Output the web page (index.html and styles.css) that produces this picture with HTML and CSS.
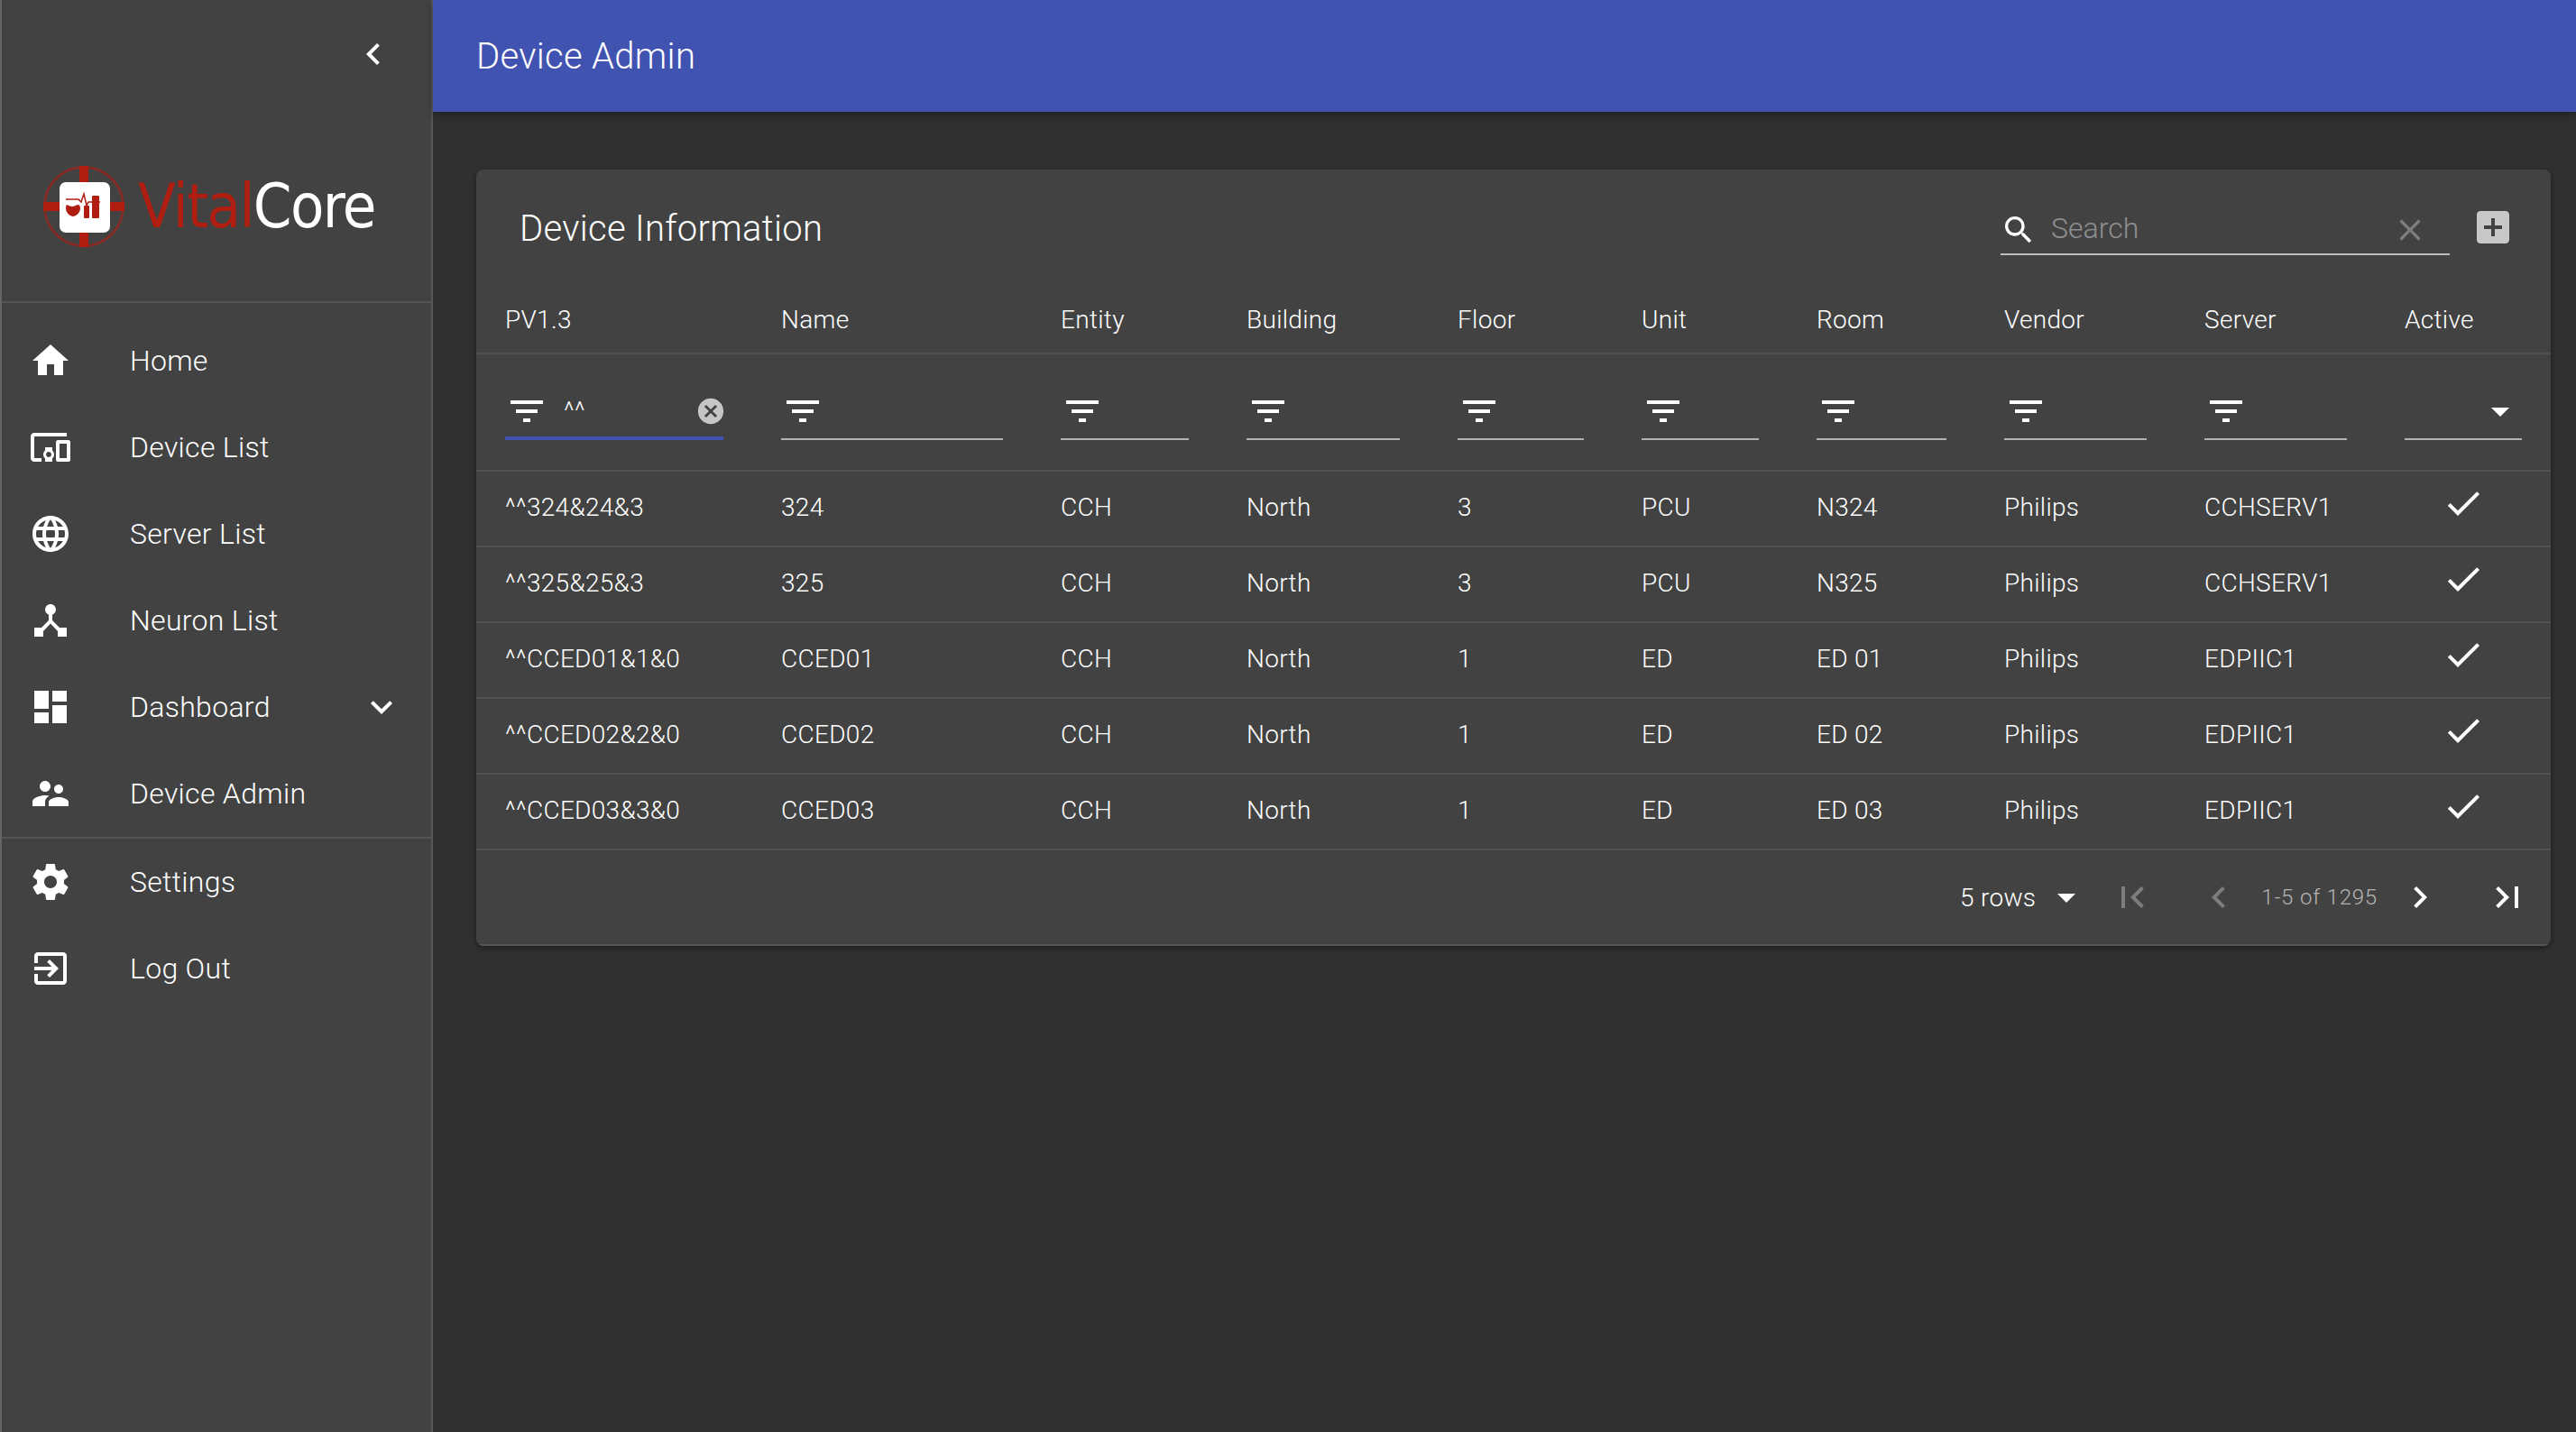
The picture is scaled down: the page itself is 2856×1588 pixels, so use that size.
FILE: index.html
```html
<!DOCTYPE html>
<html lang="en">
<head>
    <meta charset="UTF-8">
    <title>Device Admin</title>
    <link rel="stylesheet" href="styles.css">
</head>
<body>
    <svg class="icon-defs">
        <symbol id="i-filter" viewBox="0 0 24 24"><path d="M10 18h4v-2h-4v2zM3 6v2h18V6H3zm3 7h12v-2H6v2z"/></symbol>
        <symbol id="i-check" viewBox="0 0 24 24"><path d="M9 16.17L4.83 12l-1.42 1.41L9 19 21 7l-1.41-1.41z"/></symbol>
        <symbol id="i-drop" viewBox="0 0 24 24"><path d="M7 10l5 5 5-5z"/></symbol>
    </svg>

    <aside class="sidebar">
        <div class="sidebar-top">
            <svg class="icon" viewBox="0 0 24 24"><path d="M15.41 7.41L14 6l-6 6 6 6 1.41-1.41L10.83 12z"/></svg>
        </div>
        <div class="logo">
            <svg class="logo-mark" viewBox="0 0 90 90">
                <circle cx="45" cy="45" r="43.5" fill="none" stroke="#8a2a22" stroke-width="2.5"/>
                <rect x="40" y="0" width="10" height="90" fill="#b01e12"/>
                <rect x="0" y="40" width="90" height="10" fill="#b01e12"/>
                <rect x="18" y="18" width="56" height="56" rx="7" fill="#fff"/>
                <path d="M25 37h14l3 3 3-9 3 13 2-4h13" fill="none" stroke="#b01e12" stroke-width="1.5"/>
                <path d="M26 43q4 2 6 2t6-2q3 0 3 4c0 5-5 9-8 9s-8-4-8-9q0-3 1-4z" fill="#b01e12"/>
                <rect x="45" y="44" width="6" height="14" rx="1" fill="#b01e12"/>
                <rect x="54" y="33" width="8" height="25" rx="1" fill="#b01e12"/>
            </svg>
            <span class="logo-text"><span class="logo-red">Vital</span>Core</span>
        </div>
        <ul class="nav nav-main">
            <li class="nav-item">
                <svg class="icon" viewBox="0 0 24 24"><path d="M10 20v-6h4v6h5v-8h3L12 3 2 12h3v8z"/></svg>
                <span>Home</span>
            </li>
            <li class="nav-item">
                <svg class="icon" viewBox="0 0 24 24"><path d="M3 6h18V4H3c-1.1 0-2 .9-2 2v12c0 1.1.9 2 2 2h4v-2H3V6zm10 6H9v1.78c-.61.55-1 1.33-1 2.22s.39 1.67 1 2.22V20h4v-1.78c.61-.55 1-1.34 1-2.22s-.39-1.67-1-2.22V12zm-2 5.5c-.83 0-1.5-.67-1.5-1.5s.67-1.5 1.5-1.5 1.5.67 1.5 1.5-.67 1.5-1.5 1.5zM22 8h-6c-.5 0-1 .5-1 1v10c0 .5.5 1 1 1h6c.5 0 1-.5 1-1V9c0-.5-.5-1-1-1zm-1 10h-4v-8h4v8z"/></svg>
                <span>Device List</span>
            </li>
            <li class="nav-item">
                <svg class="icon" viewBox="0 0 24 24"><path d="M11.99 2C6.47 2 2 6.48 2 12s4.47 10 9.99 10C17.52 22 22 17.52 22 12S17.52 2 11.99 2zm6.93 6h-2.95c-.32-1.25-.78-2.45-1.38-3.56 1.84.63 3.37 1.91 4.33 3.56zM12 4.04c.83 1.2 1.48 2.53 1.91 3.96h-3.82c.43-1.43 1.08-2.76 1.91-3.96zM4.26 14C4.1 13.36 4 12.69 4 12s.1-1.36.26-2h3.38c-.08.66-.14 1.32-.14 2 0 .68.06 1.34.14 2H4.26zm.82 2h2.95c.32 1.25.78 2.45 1.38 3.56-1.84-.63-3.37-1.9-4.33-3.56zm2.95-8H5.08c.96-1.66 2.49-2.93 4.33-3.56C8.81 5.55 8.35 6.75 8.03 8zM12 19.96c-.83-1.2-1.48-2.53-1.91-3.96h3.82c-.43 1.43-1.08 2.76-1.91 3.96zM14.34 14H9.66c-.09-.66-.16-1.32-.16-2 0-.68.07-1.35.16-2h4.68c.09.65.16 1.32.16 2 0 .68-.07 1.34-.16 2zm.25 5.56c.6-1.11 1.06-2.31 1.38-3.56h2.95c-.96 1.65-2.49 2.93-4.33 3.56zM16.36 14c.08-.66.14-1.32.14-2 0-.68-.06-1.34-.14-2h3.38c.16.64.26 1.31.26 2s-.1 1.36-.26 2h-3.38z"/></svg>
                <span>Server List</span>
            </li>
            <li class="nav-item">
                <svg class="icon" viewBox="0 0 24 24"><path d="M17 16l-4-4V8.82C14.16 8.4 15 7.3 15 6c0-1.66-1.34-3-3-3S9 4.34 9 6c0 1.3.84 2.4 2 2.82V12l-4 4H3v5h5v-3.05l4-4.2 4 4.2V21h5v-5h-4z"/></svg>
                <span>Neuron List</span>
            </li>
            <li class="nav-item">
                <svg class="icon" viewBox="0 0 24 24"><path d="M3 13h8V3H3v10zm0 8h8v-6H3v6zm10 0h8V11h-8v10zm0-18v6h8V3h-8z"/></svg>
                <span>Dashboard</span>
                <svg class="icon nav-expand" viewBox="0 0 24 24"><path d="M16.59 8.59L12 13.17 7.41 8.59 6 10l6 6 6-6z"/></svg>
            </li>
            <li class="nav-item">
                <svg class="icon" viewBox="0 0 24 24"><path d="M16.5 12c1.38 0 2.49-1.12 2.49-2.5S17.88 7 16.5 7C15.12 7 14 8.12 14 9.5s1.12 2.5 2.5 2.5zM9 11c1.66 0 2.99-1.34 2.99-3S10.66 5 9 5C7.34 5 6 6.34 6 8s1.34 3 3 3zm7.5 3c-1.83 0-5.5.92-5.5 2.75V19h11v-2.25c0-1.83-3.67-2.75-5.5-2.75zM9 13c-2.33 0-7 1.17-7 3.5V19h7v-2.25c0-.85.33-2.34 2.37-3.47C10.5 13.1 9.66 13 9 13z"/></svg>
                <span>Device Admin</span>
            </li>
        </ul>
        <ul class="nav">
            <li class="nav-item">
                <svg class="icon" viewBox="0 0 24 24"><path d="M19.43 12.98c.04-.32.07-.64.07-.98s-.03-.66-.07-.98l2.11-1.65c.19-.15.24-.42.12-.64l-2-3.46c-.12-.22-.39-.3-.61-.22l-2.49 1c-.52-.4-1.08-.73-1.69-.98l-.38-2.65C14.46 2.18 14.25 2 14 2h-4c-.25 0-.46.18-.49.42l-.38 2.65c-.61.25-1.17.59-1.69.98l-2.49-1c-.23-.09-.49 0-.61.22l-2 3.46c-.13.22-.07.49.12.64l2.11 1.65c-.04.32-.07.65-.07.98s.03.66.07.98l-2.11 1.65c-.19.15-.24.42-.12.64l2 3.46c.12.22.39.3.61.22l2.49-1c.52.4 1.08.73 1.69.98l.38 2.65c.03.24.24.42.49.42h4c.25 0 .46-.18.49-.42l.38-2.65c.61-.25 1.17-.59 1.69-.98l2.49 1c.23.09.49 0 .61-.22l2-3.46c.12-.22.07-.49-.12-.64l-2.11-1.65zM12 15.5c-1.93 0-3.5-1.57-3.5-3.5s1.57-3.5 3.5-3.5 3.5 1.57 3.5 3.5-1.57 3.5-3.5 3.5z"/></svg>
                <span>Settings</span>
            </li>
            <li class="nav-item">
                <svg class="icon" viewBox="0 0 24 24"><path d="M10.09 15.59L11.5 17l5-5-5-5-1.41 1.41L12.67 11H3v2h9.67l-2.58 2.59zM19 3H5c-1.11 0-2 .9-2 2v4h2V5h14v14H5v-4H3v4c0 1.1.89 2 2 2h14c1.1 0 2-.9 2-2V5c0-1.1-.9-2-2-2z"/></svg>
                <span>Log Out</span>
            </li>
        </ul>
    </aside>

    <div class="main">
        <header class="app-bar">Device Admin</header>
        <section class="card">
            <div class="card-toolbar">
                <h1 class="card-title">Device Information</h1>
                <div class="search">
                    <svg class="icon-search" viewBox="0 0 24 24"><path d="M15.5 14h-.79l-.28-.27C15.41 12.59 16 11.11 16 9.5 16 5.91 13.09 3 9.5 3S3 5.91 3 9.5 5.91 16 9.5 16c1.61 0 3.09-.59 4.23-1.57l.27.28v.79l5 4.99L20.49 19l-4.99-5zm-6 0C7.01 14 5 11.99 5 9.5S7.01 5 9.5 5 14 7.01 14 9.5 11.99 14 9.5 14z"/></svg>
                    <span class="search-text">Search</span>
                    <svg class="icon-search icon-dim" viewBox="0 0 24 24"><path d="M19 6.41L17.59 5 12 10.59 6.41 5 5 6.41 10.59 12 5 17.59 6.41 19 12 13.41 17.59 19 19 17.59 13.41 12z"/></svg>
                </div>
                <svg class="icon icon-add" viewBox="0 0 24 24"><path d="M19 3H5c-1.11 0-2 .9-2 2v14c0 1.1.89 2 2 2h14c1.1 0 2-.9 2-2V5c0-1.1-.9-2-2-2zm-2 10h-4v4h-2v-4H7v-2h4V7h2v4h4v2z"/></svg>
            </div>

            <table class="device-table">
                <colgroup>
                    <col class="col-pv"><col class="col-name"><col class="col-entity"><col class="col-building"><col class="col-floor">
                    <col class="col-unit"><col class="col-room"><col class="col-vendor"><col class="col-server"><col class="col-active">
                </colgroup>
                <thead>
                    <tr class="head-row">
                        <th>PV1.3</th><th>Name</th><th>Entity</th><th>Building</th><th>Floor</th>
                        <th>Unit</th><th>Room</th><th>Vendor</th><th>Server</th><th>Active</th>
                    </tr>
                    <tr class="filter-row">
                        <td>
                            <div class="filter filter-focused">
                                <svg class="icon"><use href="#i-filter"/></svg>
                                <span class="filter-value">^^</span>
                                <svg class="icon-clear" viewBox="0 0 24 24"><path d="M12 2C6.47 2 2 6.47 2 12s4.47 10 10 10 10-4.47 10-10S17.53 2 12 2zm5 13.59L15.59 17 12 13.41 8.41 17 7 15.59 10.59 12 7 8.41 8.41 7 12 10.59 15.59 7 17 8.41 13.41 12 17 15.59z"/></svg>
                            </div>
                        </td>
                        <td><div class="filter"><svg class="icon"><use href="#i-filter"/></svg></div></td>
                        <td><div class="filter"><svg class="icon"><use href="#i-filter"/></svg></div></td>
                        <td><div class="filter"><svg class="icon"><use href="#i-filter"/></svg></div></td>
                        <td><div class="filter"><svg class="icon"><use href="#i-filter"/></svg></div></td>
                        <td><div class="filter"><svg class="icon"><use href="#i-filter"/></svg></div></td>
                        <td><div class="filter"><svg class="icon"><use href="#i-filter"/></svg></div></td>
                        <td><div class="filter"><svg class="icon"><use href="#i-filter"/></svg></div></td>
                        <td><div class="filter"><svg class="icon"><use href="#i-filter"/></svg></div></td>
                        <td><div class="filter filter-select"><svg class="icon"><use href="#i-drop"/></svg></div></td>
                    </tr>
                </thead>
                <tbody>
                    <tr>
                        <td>^^324&amp;24&amp;3</td><td>324</td><td>CCH</td><td>North</td><td>3</td><td>PCU</td><td>N324</td><td>Philips</td><td>CCHSERV1</td>
                        <td class="cell-active"><svg class="icon"><use href="#i-check"/></svg></td>
                    </tr>
                    <tr>
                        <td>^^325&amp;25&amp;3</td><td>325</td><td>CCH</td><td>North</td><td>3</td><td>PCU</td><td>N325</td><td>Philips</td><td>CCHSERV1</td>
                        <td class="cell-active"><svg class="icon"><use href="#i-check"/></svg></td>
                    </tr>
                    <tr>
                        <td>^^CCED01&amp;1&amp;0</td><td>CCED01</td><td>CCH</td><td>North</td><td>1</td><td>ED</td><td>ED 01</td><td>Philips</td><td>EDPIIC1</td>
                        <td class="cell-active"><svg class="icon"><use href="#i-check"/></svg></td>
                    </tr>
                    <tr>
                        <td>^^CCED02&amp;2&amp;0</td><td>CCED02</td><td>CCH</td><td>North</td><td>1</td><td>ED</td><td>ED 02</td><td>Philips</td><td>EDPIIC1</td>
                        <td class="cell-active"><svg class="icon"><use href="#i-check"/></svg></td>
                    </tr>
                    <tr>
                        <td>^^CCED03&amp;3&amp;0</td><td>CCED03</td><td>CCH</td><td>North</td><td>1</td><td>ED</td><td>ED 03</td><td>Philips</td><td>EDPIIC1</td>
                        <td class="cell-active"><svg class="icon"><use href="#i-check"/></svg></td>
                    </tr>
                </tbody>
            </table>

            <div class="pager">
                <span class="pager-rows">5 rows</span>
                <svg class="icon pager-drop"><use href="#i-drop"/></svg>
                <svg class="icon icon-dim pager-first" viewBox="0 0 24 24"><path d="M18.41 16.59L13.82 12l4.59-4.59L17 6l-6 6 6 6zM6 6h2v12H6z"/></svg>
                <svg class="icon icon-dim pager-prev" viewBox="0 0 24 24"><path d="M15.41 7.41L14 6l-6 6 6 6 1.41-1.41L10.83 12z"/></svg>
                <span class="pager-count">1-5 of 1295</span>
                <svg class="icon pager-next" viewBox="0 0 24 24"><path d="M10 6L8.59 7.41 13.17 12l-4.58 4.59L10 18l6-6z"/></svg>
                <svg class="icon pager-last" viewBox="0 0 24 24"><path d="M5.59 7.41L10.18 12l-4.59 4.59L7 18l6-6-6-6zM16 6h2v12h-2z"/></svg>
            </div>
        </section>
    </div>
</body>
</html>
```

FILE: styles.css
```css
* {
    margin: 0;
    padding: 0;
    box-sizing: border-box;
}
body {
    display: flex;
    height: 1588px;
    overflow: hidden;
    background-color: #303030;
    color: #fff;
    font-family: Roboto, sans-serif;
    font-weight: 300;
}
.icon-defs {
    display: none;
}
.icon {
    display: block;
    flex: none;
    width: 48px;
    height: 48px;
    fill: #fff;
}
.icon-dim {
    fill: #7d7d7d;
}

/* sidebar */
.sidebar {
    flex: none;
    width: 480px;
    background-color: #424242;
    border-left: 2px solid #666;
    border-right: 2px solid #575757;
}
.sidebar-top {
    display: flex;
    justify-content: flex-end;
    height: 124px;
    padding: 36px 40px 0 0;
}
.logo {
    display: flex;
    align-items: center;
    height: 212px;
    padding: 0 0 0 46px;
    border-bottom: 2px solid #555;
}
.logo-mark {
    flex: none;
    width: 90px;
    height: 90px;
}
.logo-text {
    margin-left: 15px;
    color: #fff;
    font-family: "DejaVu Sans", sans-serif;
    font-stretch: condensed;
    font-size: 68px;
    font-weight: 400;
    letter-spacing: -1.6px;
    line-height: 1;
}
.logo-red {
    color: #b01e12;
}
.nav {
    list-style: none;
}
.nav-main {
    padding-top: 16px;
    border-bottom: 2px solid #555;
}
.nav-item {
    display: flex;
    align-items: center;
    height: 96px;
    padding-left: 30px;
    font-size: 32px;
    letter-spacing: 0.3px;
}
.nav-item span {
    margin-left: 64px;
}
.nav-expand {
    margin-left: auto;
    margin-right: 31px;
}

/* main area */
.main {
    flex: 1;
    min-width: 0;
}
.app-bar {
    display: flex;
    align-items: center;
    height: 124px;
    padding-left: 48px;
    background-color: #4153b1;
    box-shadow: 0 4px 8px rgba(0, 0, 0, 0.3);
    font-size: 40px;
    letter-spacing: 0.3px;
}
.card {
    margin: 64px 28px 0 48px;
    background-color: #424242;
    border-radius: 8px;
    box-shadow: 0 2px 6px rgba(0, 0, 0, 0.4);
    overflow: hidden;
}
.card-toolbar {
    display: flex;
    align-items: flex-start;
    height: 132px;
    padding: 40px 40px 0 48px;
}
.card-title {
    flex: 1;
    font-size: 40px;
    font-weight: 300;
    letter-spacing: 0.3px;
    line-height: 52px;
}
.search {
    display: flex;
    align-items: center;
    width: 498px;
    height: 55px;
    padding-right: 24px;
    border-bottom: 2px solid #bdbdbd;
}
.icon-search {
    display: block;
    flex: none;
    width: 40px;
    height: 40px;
    fill: #fff;
}
.icon-search.icon-dim {
    fill: #7d7d7d;
}
.search-text {
    flex: 1;
    margin: 0 0 3px 16px;
    color: #8f8f8f;
    font-size: 32px;
}
.icon-add {
    margin-left: 24px;
    fill: #c8c8c8;
}

/* table */
.device-table {
    width: 100%;
    border-collapse: collapse;
    table-layout: fixed;
    font-size: 28px;
    letter-spacing: 0.3px;
}
.col-pv { width: 306px; }
.col-name { width: 310px; }
.col-entity { width: 206px; }
.col-building { width: 234px; }
.col-floor { width: 204px; }
.col-unit { width: 194px; }
.col-room { width: 208px; }
.col-vendor { width: 222px; }
.col-server { width: 222px; }
.col-active { width: 194px; }
.device-table th,
.device-table td {
    padding: 0 32px;
    border-bottom: 2px solid #515151;
    text-align: left;
    font-weight: 300;
}
.device-table th {
    padding-bottom: 2px;
}
.device-table tbody td {
    padding-bottom: 3px;
}
.head-row {
    height: 72px;
}
.filter-row {
    height: 130px;
}
.device-table tbody tr {
    height: 84px;
}
.filter {
    display: flex;
    align-items: flex-start;
    height: 56px;
    margin-top: 6px;
    border-bottom: 2px solid #b3b3b3;
}
.filter-focused {
    border-bottom: 4px solid #4153b1;
}
.filter-select {
    justify-content: flex-end;
}
.filter-value {
    flex: 1;
    margin-left: 17px;
    line-height: 48px;
}
.icon-clear {
    flex: none;
    width: 34px;
    height: 34px;
    margin: 7px -3px 0 0;
    fill: #c6c6c6;
}
.device-table tbody td.cell-active {
    padding: 0;
}
.cell-active .icon {
    margin: -12px auto 0;
}

/* pagination */
.pager {
    display: flex;
    align-items: center;
    justify-content: flex-end;
    height: 106px;
    padding-right: 24px;
    border-bottom: 2px solid #555;
}
.pager-rows {
    font-size: 28px;
    letter-spacing: 0.3px;
}
.pager-drop {
    margin-left: 10px;
}
.pager-first {
    margin-left: 25px;
}
.pager-prev {
    margin-left: 48px;
}
.pager-count {
    margin-left: 23px;
    color: #b4b4b4;
    font-size: 24px;
    letter-spacing: 0.8px;
}
.pager-next {
    margin-left: 23px;
}
.pager-last {
    margin-left: 49px;
}
```
